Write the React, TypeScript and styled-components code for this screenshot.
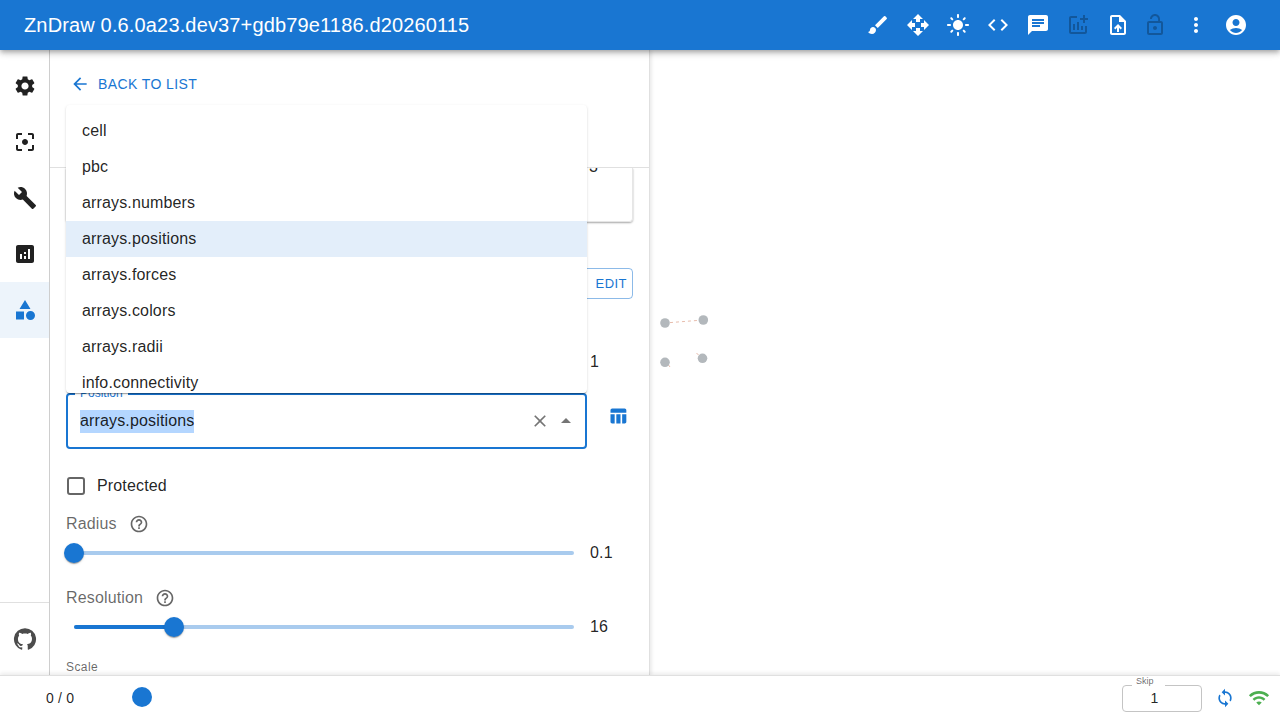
import React from 'react'
import styled, {createGlobalStyle} from 'styled-components'

// icon paths
const icons = {
    brush: 'M7 14c-1.66 0-3 1.34-3 3 0 1.31-1.16 2-2 2 .92 1.22 2.49 2 4 2 2.21 0 4-1.79 4-4 0-1.66-1.34-3-3-3zm13.71-9.37-1.34-1.34a.9959.9959 0 0 0-1.41 0L9 12.25 11.75 15l8.96-8.96c.39-.39.39-1.02 0-1.41z',
    move: 'M10 9h4V6h3l-5-5-5 5h3v3zm-1 1H6V7l-5 5 5 5v-3h3v-4zm14 2-5-5v3h-3v4h3v3l5-5zm-9 3h-4v3H7l5 5 5-5h-3v-3z',
    light: 'M12 7c-2.76 0-5 2.24-5 5s2.24 5 5 5 5-2.24 5-5-2.24-5-5-5zM2 13h2c.55 0 1-.45 1-1s-.45-1-1-1H2c-.55 0-1 .45-1 1s.45 1 1 1zm18 0h2c.55 0 1-.45 1-1s-.45-1-1-1h-2c-.55 0-1 .45-1 1s.45 1 1 1zM11 2v2c0 .55.45 1 1 1s1-.45 1-1V2c0-.55-.45-1-1-1s-1 .45-1 1zm0 18v2c0 .55.45 1 1 1s1-.45 1-1v-2c0-.55-.45-1-1-1s-1 .45-1 1zM5.99 4.58c-.39-.39-1.03-.39-1.41 0-.39.39-.39 1.03 0 1.41l1.06 1.06c.39.39 1.03.39 1.41 0s.39-1.03 0-1.41L5.99 4.58zm12.37 12.37c-.39-.39-1.03-.39-1.41 0-.39.39-.39 1.03 0 1.41l1.06 1.06c.39.39 1.03.39 1.41 0 .39-.39.39-1.03 0-1.41l-1.06-1.06zm1.06-10.96c.39-.39.39-1.03 0-1.41-.39-.39-1.03-.39-1.41 0l-1.06 1.06c-.39.39-.39 1.03 0 1.41s1.03.39 1.41 0l1.06-1.06zM7.05 18.36c.39-.39.39-1.03 0-1.41-.39-.39-1.03-.39-1.41 0l-1.06 1.06c-.39.39-.39 1.03 0 1.41s1.03.39 1.41 0l1.06-1.06z',
    code: 'M9.4 16.6 4.8 12l4.6-4.6L8 6l-6 6 6 6 1.4-1.4zm5.2 0 4.6-4.6-4.6-4.6L16 6l6 6-6 6-1.4-1.4z',
    chat: 'M20 2H4c-1.1 0-1.99.9-1.99 2L2 22l4-4h14c1.1 0 2-.9 2-2V4c0-1.1-.9-2-2-2zM6 9h12v2H6V9zm8 5H6v-2h8v2zm4-6H6V6h12v2z',
    addChart: 'M22 5v2h-3v3h-2V7h-3V5h3V2h2v3h3zm-3 14H5V5h6V3H5c-1.1 0-2 .9-2 2v14c0 1.1.9 2 2 2h14c1.1 0 2-.9 2-2v-6h-2v6zm-4-6v4h2v-4h-2zm-4 4h2V9h-2v8zm-2 0v-6H7v6h2z',
    upload: 'M14 2H6c-1.1 0-1.99.9-1.99 2L4 20c0 1.1.89 2 1.99 2H18c1.1 0 2-.9 2-2V8l-6-6zm4 18H6V4h7v5h5v11zM8 15.01l1.41 1.41L11 14.84V19h2v-4.16l1.59 1.59L16 15.01 12.01 11 8 15.01z',
    lockOpen: 'M12 17c1.1 0 2-.9 2-2s-.9-2-2-2-2 .9-2 2 .9 2 2 2zm6-9h-1V6c0-2.76-2.24-5-5-5S7 3.24 7 6h1.9c0-1.71 1.39-3.1 3.1-3.1 1.71 0 3.1 1.39 3.1 3.1v2H6c-1.1 0-2 .9-2 2v10c0 1.1.9 2 2 2h12c1.1 0 2-.9 2-2V10c0-1.1-.9-2-2-2zm0 12H6V10h12v10z',
    more: 'M12 8c1.1 0 2-.9 2-2s-.9-2-2-2-2 .9-2 2 .9 2 2 2zm0 2c-1.1 0-2 .9-2 2s.9 2 2 2 2-.9 2-2-.9-2-2-2zm0 6c-1.1 0-2 .9-2 2s.9 2 2 2 2-.9 2-2-.9-2-2-2z',
    account: 'M12 2C6.48 2 2 6.48 2 12s4.48 10 10 10 10-4.48 10-10S17.52 2 12 2zm0 4c1.93 0 3.5 1.57 3.5 3.5S13.93 13 12 13s-3.5-1.57-3.5-3.5S10.07 6 12 6zm0 14c-2.03 0-4.43-.82-6.14-2.88C7.55 15.8 9.68 15 12 15s4.45.8 6.14 2.12C16.43 19.18 14.03 20 12 20z',
    settings: 'M19.14 12.94c.04-.3.06-.61.06-.94 0-.32-.02-.64-.07-.94l2.03-1.58c.18-.14.23-.41.12-.61l-1.92-3.32c-.12-.22-.37-.29-.59-.22l-2.39.96c-.5-.38-1.03-.7-1.62-.94l-.36-2.54c-.04-.24-.24-.41-.48-.41h-3.84c-.24 0-.43.17-.47.41l-.36 2.54c-.59.24-1.13.57-1.62.94l-2.39-.96c-.22-.08-.47 0-.59.22L2.74 8.87c-.12.21-.08.47.12.61l2.03 1.58c-.05.3-.09.63-.09.94s.02.64.07.94l-2.03 1.58c-.18.14-.23.41-.12.61l1.92 3.32c.12.22.37.29.59.22l2.39-.96c.5.38 1.03.7 1.62.94l.36 2.54c.05.24.24.41.48.41h3.84c.24 0 .44-.17.47-.41l.36-2.54c.59-.24 1.13-.56 1.62-.94l2.39.96c.22.08.47 0 .59-.22l1.92-3.32c.12-.22.07-.47-.12-.61l-2.01-1.58zM12 15.6c-1.98 0-3.6-1.62-3.6-3.6s1.62-3.6 3.6-3.6 3.6 1.62 3.6 3.6-1.62 3.6-3.6 3.6z',
    focus: 'M5 15H3v4c0 1.1.9 2 2 2h4v-2H5v-4zM5 5h4V3H5c-1.1 0-2 .9-2 2v4h2V5zm14-2h-4v2h4v4h2V5c0-1.1-.9-2-2-2zm0 16h-4v2h4c1.1 0 2-.9 2-2v-4h-2v4zM12 9c-1.66 0-3 1.34-3 3s1.34 3 3 3 3-1.34 3-3-1.34-3-3-3z',
    build: 'M22.7 19l-9.1-9.1c.9-2.3.4-5-1.5-6.9-2-2-5-2.4-7.4-1.3L9 6 6 9 1.6 4.7C.4 7.1.9 10.1 2.9 12.1c1.9 1.9 4.6 2.4 6.9 1.5l9.1 9.1c.4.4 1 .4 1.4 0l2.3-2.3c.5-.4.5-1.1.1-1.4z',
    analytics: 'M19 3H5c-1.1 0-2 .9-2 2v14c0 1.1.9 2 2 2h14c1.1 0 2-.9 2-2V5c0-1.1-.9-2-2-2zM9 17H7v-5h2v5zm4 0h-2v-3h2v3zm0-5h-2v-2h2v2zm4 5h-2V7h2v10z',
    category: 'M12 2l-5.5 9h11L12 2zM17.5 13a4.5 4.5 0 1 0 0 9 4.5 4.5 0 0 0 0-9zM3 13.5h8v8H3v-8z',
    github: 'M12 1.27a11 11 0 00-3.48 21.46c.55.09.73-.28.73-.55v-1.84c-3.03.64-3.67-1.46-3.67-1.46-.55-1.29-1.28-1.65-1.28-1.65-.92-.65.1-.65.1-.65 1.1 0 1.73 1.1 1.73 1.1.92 1.65 2.57 1.2 3.21.92a2 2 0 01.64-1.47c-2.47-.27-5.04-1.19-5.04-5.5 0-1.1.46-2.1 1.2-2.84a3.76 3.76 0 010-2.93s.91-.28 3.11 1.1c1.8-.49 3.7-.49 5.5 0 2.1-1.38 3.02-1.1 3.02-1.1a3.76 3.76 0 010 2.93c.83.74 1.2 1.74 1.2 2.94 0 4.21-2.57 5.13-5.04 5.4.45.37.82.92.82 2.02v3.03c0 .27.1.64.73.55A11 11 0 0012 1.27',
    arrowBack: 'M20 11H7.83l5.59-5.59L12 4l-8 8 8 8 1.41-1.41L7.83 13H20v-2z',
    close: 'M19 6.41 17.59 5 12 10.59 6.41 5 5 6.41 10.59 12 5 17.59 6.41 19 12 13.41 17.59 19 19 17.59 13.41 12z',
    dropUp: 'M7 14l5-5 5 5H7z',
    table: 'M10 10.02h5V21h-5zM17 21h3c1.1 0 2-.9 2-2v-9h-5v11zm3-18H5c-1.1 0-2 .9-2 2v3h19V5c0-1.1-.9-2-2-2zM3 19c0 1.1.9 2 2 2h3V10H3v9z',
    help: 'M11 18h2v-2h-2v2zm1-16C6.48 2 2 6.48 2 12s4.48 10 10 10 10-4.48 10-10S17.52 2 12 2zm0 18c-4.41 0-8-3.59-8-8s3.59-8 8-8 8 3.59 8 8-3.59 8-8 8zm0-14c-2.21 0-4 1.79-4 4h2c0-1.1.9-2 2-2s2 .9 2 2c0 2-3 1.75-3 5h2c0-2.25 3-2.5 3-5 0-2.21-1.79-4-4-4z',
    sync: 'M12 4V1L8 5l4 4V6c3.31 0 6 2.69 6 6 0 1.01-.25 1.97-.7 2.8l1.46 1.46C19.54 15.03 20 13.57 20 12c0-4.42-3.58-8-8-8zm0 14c-3.31 0-6-2.69-6-6 0-1.01.25-1.97.7-2.8L5.24 7.74C4.46 8.97 4 10.43 4 12c0 4.42 3.58 8 8 8v3l4-4-4-4v3z',
    wifi: 'M1 9l2 2c4.97-4.97 13.03-4.97 18 0l2-2C16.93 2.93 7.08 2.93 1 9zm8 8l3 3 3-3c-1.65-1.66-4.34-1.66-6 0zm-4-4l2 2c2.76-2.76 7.24-2.76 10 0l2-2C15.14 9.14 8.87 9.14 5 13z',
}

type IconName = keyof typeof icons

// types
type IconProps = {
    name: IconName
    size?: number
    color?: string
}

type SliderProps = {
    percent: number
    value: string
}

const Icon = ({name, size = 24, color = 'currentColor'}: IconProps) => (
    <Svg viewBox="0 0 24 24" $size={size} $color={color}>
        <path d={icons[name]} />
    </Svg>
)

const Slider = ({percent, value}: SliderProps) => (
    <SliderRow>
        <SliderTrack>
            <SliderFill style={{width: `${percent}%`}} />
            <SliderThumb style={{left: `${percent}%`}} />
        </SliderTrack>
        <SliderValue>{value}</SliderValue>
    </SliderRow>
)

const headerActions: { name: IconName, muted?: boolean, narrow?: boolean }[] = [
    {name: 'brush'},
    {name: 'move'},
    {name: 'light'},
    {name: 'code'},
    {name: 'chat'},
    {name: 'addChart', muted: true},
    {name: 'upload'},
    {name: 'lockOpen', muted: true, narrow: true},
    {name: 'more'},
    {name: 'account'},
]

const sideItems: { name: IconName, active?: boolean }[] = [
    {name: 'settings'},
    {name: 'focus'},
    {name: 'build'},
    {name: 'analytics'},
    {name: 'category', active: true},
]

const menuItems = [
    'cell',
    'pbc',
    'arrays.numbers',
    'arrays.positions',
    'arrays.forces',
    'arrays.colors',
    'arrays.radii',
    'info.connectivity',
]

export default function App() {
    return (
        <Page>
            <GlobalStyle />
            <Header>
                <Title>ZnDraw 0.6.0a23.dev37+gdb79e1186.d20260115</Title>
                <HeaderActions>
                    {headerActions.map(action =>
                        <HeaderButton key={action.name} $muted={action.muted} $narrow={action.narrow}>
                            <Icon name={action.name} />
                        </HeaderButton>
                    )}
                </HeaderActions>
            </Header>

            <Main>
                <Sidebar>
                    <SideList>
                        {sideItems.map(item =>
                            <SideItem key={item.name} $active={item.active}>
                                <Icon name={item.name} />
                            </SideItem>
                        )}
                    </SideList>
                    <SideFooter>
                        <Icon name="github" color="rgba(0,0,0,0.7)" />
                    </SideFooter>
                </Sidebar>

                <Panel>
                    <PanelHead>
                        <BackButton>
                            <Icon name="arrowBack" size={20} />
                            Back to list
                        </BackButton>
                    </PanelHead>

                    <PanelBody>
                        <ClippedCard>
                            <CardValue>3</CardValue>
                        </ClippedCard>

                        <EditRow>
                            <EditButton>Edit</EditButton>
                        </EditRow>

                        <HiddenSliderWrap>
                            <Slider percent={100} value="1" />
                        </HiddenSliderWrap>

                        <PositionRow>
                            <PositionField>
                                <FieldLabel>Position</FieldLabel>
                                <SelectedText>arrays.positions</SelectedText>
                                <FieldIcons>
                                    <Icon name="close" size={20} color="rgba(0,0,0,0.54)" />
                                    <Icon name="dropUp" color="rgba(0,0,0,0.54)" />
                                </FieldIcons>
                            </PositionField>
                            <TableButton>
                                <Icon name="table" size={20} />
                            </TableButton>
                        </PositionRow>

                        <CheckRow>
                            <CheckBox />
                            Protected
                        </CheckRow>

                        <ParamLabel>
                            Radius
                            <Icon name="help" size={20} color="rgba(0,0,0,0.6)" />
                        </ParamLabel>
                        <Slider percent={0} value="0.1" />

                        <ParamLabel $spaced>
                            Resolution
                            <Icon name="help" size={20} color="rgba(0,0,0,0.6)" />
                        </ParamLabel>
                        <Slider percent={20} value="16" />

                        <SmallLabel>Scale</SmallLabel>
                    </PanelBody>

                    <Menu>
                        {menuItems.map(item =>
                            <MenuItem key={item} $selected={item === 'arrays.positions'}>{item}</MenuItem>
                        )}
                    </Menu>
                </Panel>

                <Canvas>
                    <CanvasDrawing viewBox="0 0 630 625">
                        <g stroke="#dc9f88" strokeWidth="0.7" strokeDasharray="3 3" fill="none">
                            <path d="M20 272.6 L48 270.4" />
                            <path d="M46.5 303 L50 306.5" />
                            <path d="M18.5 315 L20 317" />
                        </g>
                        <g fill="#b3b8bc">
                            <circle cx="15" cy="273" r="4.8" />
                            <circle cx="53.3" cy="270" r="4.8" />
                            <circle cx="15" cy="312.3" r="4.8" />
                            <circle cx="52.5" cy="308.3" r="4.8" />
                        </g>
                    </CanvasDrawing>
                </Canvas>
            </Main>

            <Footer>
                <FrameCount>0 / 0</FrameCount>
                <FrameThumb />
                <FooterRight>
                    <SkipField>
                        <SkipLabel>Skip</SkipLabel>
                        1
                    </SkipField>
                    <Icon name="sync" size={20} color="#1976d2" />
                    <WifiSlot>
                        <Icon name="wifi" size={22} color="#4caf50" />
                    </WifiSlot>
                </FooterRight>
            </Footer>
        </Page>
    )
}

const GlobalStyle = createGlobalStyle`
  html, body {
    margin: 0;
    padding: 0;
    background: #fff;
    overflow: hidden;
  }

  body {
    font-family: "Liberation Sans", Arial, sans-serif;
    color: rgba(0, 0, 0, 0.87);
  }

  * {
    box-sizing: border-box;
  }
`

const Svg = styled.svg<{ $size: number, $color: string }>`
  display: block;
  flex: none;
  width: ${p => p.$size}px;
  height: ${p => p.$size}px;
  fill: ${p => p.$color};
`

const Page = styled.div`
  display: flex;
  flex-direction: column;
  width: 1280px;
  height: 720px;
  overflow: hidden;
`

const Header = styled.header`
  position: relative;
  z-index: 5;
  display: flex;
  align-items: center;
  justify-content: space-between;
  flex: none;
  height: 50px;
  padding: 0 24px;
  background-color: #1976d2;
  color: #fff;
  box-shadow: 0 2px 4px -1px rgba(0, 0, 0, 0.2), 0 4px 5px 0 rgba(0, 0, 0, 0.14), 0 1px 10px 0 rgba(0, 0, 0, 0.12);
`

const Title = styled.div`
  font-size: 20px;
  font-weight: 400;
  letter-spacing: 0.15px;
  line-height: 32px;
  margin-top: -1px;
`

const HeaderActions = styled.div`
  display: flex;
  align-items: center;
`

const HeaderButton = styled.div<{ $muted?: boolean, $narrow?: boolean }>`
  display: flex;
  align-items: center;
  justify-content: center;
  width: ${p => p.$narrow ? 34 : 40}px;
  height: 40px;
  margin-right: ${p => p.$narrow ? 4 : 0}px;
  color: ${p => p.$muted ? 'rgba(0, 0, 0, 0.26)' : '#fff'};
`

const Main = styled.div`
  display: flex;
  flex: 1;
  min-height: 0;
`

const Sidebar = styled.aside`
  display: flex;
  flex-direction: column;
  justify-content: space-between;
  flex: none;
  width: 50px;
  border-right: 1px solid #cfcfcf;
  background: #fff;
`

const SideList = styled.div`
  display: flex;
  flex-direction: column;
  padding-top: 8px;
`

const SideItem = styled.div<{ $active?: boolean }>`
  display: flex;
  align-items: center;
  justify-content: center;
  height: 56px;
  padding-left: 1px;
  color: ${p => p.$active ? '#1976d2' : 'rgba(0, 0, 0, 0.87)'};
  background-color: ${p => p.$active ? 'rgba(25, 118, 210, 0.08)' : 'transparent'};
`

const SideFooter = styled.div`
  display: flex;
  align-items: center;
  justify-content: center;
  height: 73px;
  padding-left: 1px;
  border-top: 1px solid #e0e0e0;
`

const Panel = styled.section`
  position: relative;
  z-index: 2;
  display: flex;
  flex-direction: column;
  flex: none;
  width: 600px;
  background: #fff;
  border-right: 1px solid #e0e0e0;
  box-shadow: 2px 0 3px rgba(0, 0, 0, 0.08);
`

const PanelHead = styled.div`
  flex: none;
  height: 118px;
  padding: 18px 16px 0 16px;
  border-bottom: 1px solid #e0e0e0;
`

const BackButton = styled.div`
  display: flex;
  align-items: center;
  gap: 8px;
  height: 32px;
  padding-left: 4px;
  color: #1976d2;
  font-size: 14px;
  font-weight: 400;
  letter-spacing: 0.4px;
  text-transform: uppercase;
`

const PanelBody = styled.div`
  flex: 1;
  min-height: 0;
  overflow: hidden;
  padding: 0 16px;
`

const ClippedCard = styled.div`
  position: relative;
  height: 54px;
  overflow: hidden;
  border: 1px solid #e6e6e6;
  border-top: none;
  border-radius: 0 0 4px 4px;
  box-shadow: 0 1px 2px rgba(0, 0, 0, 0.35);
`

const CardValue = styled.div`
  margin: -11px 0 0 522px;
  font-size: 16px;
  line-height: 20px;
`

const EditRow = styled.div`
  display: flex;
  justify-content: flex-end;
  margin-top: 46px;
`

const EditButton = styled.div`
  display: flex;
  align-items: center;
  justify-content: flex-end;
  width: 60px;
  height: 31px;
  padding-right: 5px;
  border: 1px solid rgba(25, 118, 210, 0.5);
  border-radius: 4px;
  color: #1976d2;
  font-size: 13px;
  letter-spacing: 0.46px;
  text-transform: uppercase;
`

const HiddenSliderWrap = styled.div`
  margin-top: 48px;
`

const SliderRow = styled.div`
  display: flex;
  align-items: center;
  height: 30px;
`

const SliderTrack = styled.div`
  position: relative;
  flex: none;
  width: 500px;
  height: 4px;
  margin-left: 8px;
  border-radius: 2px;
  background-color: #a9cbee;
`

const SliderFill = styled.div`
  height: 4px;
  border-radius: 2px;
  background-color: #1976d2;
`

const SliderThumb = styled.div`
  position: absolute;
  top: -8px;
  width: 20px;
  height: 20px;
  margin-left: -10px;
  border-radius: 50%;
  background-color: #1976d2;
  box-shadow: 0 2px 1px -1px rgba(0, 0, 0, 0.2), 0 1px 1px 0 rgba(0, 0, 0, 0.14), 0 1px 3px 0 rgba(0, 0, 0, 0.12);
`

const SliderValue = styled.div`
  margin-left: 16px;
  font-size: 16px;
  letter-spacing: 0.15px;
  line-height: 24px;
`

const PositionRow = styled.div`
  display: flex;
  align-items: flex-start;
  margin-top: 16px;
`

const PositionField = styled.div`
  position: relative;
  display: flex;
  align-items: center;
  justify-content: space-between;
  flex: none;
  width: 521px;
  height: 56px;
  padding: 0 7px 0 12px;
  border: 2px solid #1976d2;
  border-radius: 4px;
`

const FieldLabel = styled.span`
  position: absolute;
  top: -9px;
  left: 7px;
  padding: 0 5px;
  background: #fff;
  color: #1976d2;
  font-size: 12px;
  line-height: 14px;
`

const SelectedText = styled.span`
  padding-bottom: 1px;
  background-color: #b4d6ff;
  font-size: 16px;
  letter-spacing: 0.15px;
  line-height: 22px;
`

const FieldIcons = styled.div`
  display: flex;
  align-items: center;
  gap: 4px;
`

const TableButton = styled.div`
  margin: 13px 0 0 21px;
  color: #1976d2;
`

const CheckRow = styled.div`
  display: flex;
  align-items: center;
  gap: 12px;
  height: 42px;
  margin-top: 16px;
  padding-left: 1px;
  font-size: 16px;
  letter-spacing: 0.15px;
`

const CheckBox = styled.span`
  flex: none;
  width: 18px;
  height: 18px;
  border: 2px solid #666;
  border-radius: 3px;
`

const ParamLabel = styled.div<{ $spaced?: boolean }>`
  display: flex;
  align-items: center;
  gap: 12px;
  height: 24px;
  margin-top: ${p => p.$spaced ? 18 : 5}px;
  margin-bottom: 2px;
  color: rgba(0, 0, 0, 0.6);
  font-size: 16px;
  letter-spacing: 0.15px;
`

const SmallLabel = styled.div`
  margin-top: 18px;
  color: rgba(0, 0, 0, 0.6);
  font-size: 12px;
  letter-spacing: 0.4px;
  line-height: 14px;
`

const Menu = styled.ul`
  position: absolute;
  top: 55px;
  left: 16px;
  z-index: 3;
  width: 521px;
  height: 288px;
  margin: 0;
  padding: 8px 0 0 0;
  overflow: hidden;
  list-style: none;
  background: #fff;
  border-radius: 4px;
  box-shadow: 0 2px 1px -1px rgba(0, 0, 0, 0.2), 0 1px 1px 0 rgba(0, 0, 0, 0.14), 0 1px 3px 0 rgba(0, 0, 0, 0.12);
`

const MenuItem = styled.li<{ $selected?: boolean }>`
  display: flex;
  align-items: center;
  height: 36px;
  padding-left: 16px;
  font-size: 16px;
  letter-spacing: 0.15px;
  background-color: ${p => p.$selected ? 'rgba(25, 118, 210, 0.12)' : 'transparent'};
`

const Canvas = styled.main`
  flex: 1;
  min-width: 0;
  background: #fff;
`

const CanvasDrawing = styled.svg`
  display: block;
  width: 630px;
  height: 625px;
`

const Footer = styled.footer`
  position: relative;
  z-index: 4;
  display: flex;
  align-items: center;
  flex: none;
  height: 45px;
  padding-left: 46px;
  background: #fff;
  border-top: 1px solid #e0e0e0;
  box-shadow: 0 -2px 4px rgba(0, 0, 0, 0.08);
`

const FrameCount = styled.div`
  width: 76px;
  font-size: 14px;
  letter-spacing: 0.2px;
`

const FrameThumb = styled.div`
  width: 20px;
  height: 20px;
  margin: -2px 0 0 10px;
  border-radius: 50%;
  background-color: #1976d2;
`

const FooterRight = styled.div`
  display: flex;
  align-items: center;
  gap: 13px;
  margin-left: auto;
  padding-right: 10px;
`

const SkipField = styled.div`
  position: relative;
  display: flex;
  align-items: center;
  justify-content: center;
  width: 80px;
  height: 27px;
  padding-right: 15px;
  border: 1px solid #c4c4c4;
  border-radius: 4px;
  font-size: 14px;
`

const SkipLabel = styled.span`
  position: absolute;
  top: -9px;
  left: 9px;
  width: 33px;
  height: 10px;
  padding-left: 4px;
  background: #fff;
  color: rgba(0, 0, 0, 0.6);
  font-size: 9px;
  line-height: 8px;
`

const WifiSlot = styled.div`
  margin-top: -1px;
`
